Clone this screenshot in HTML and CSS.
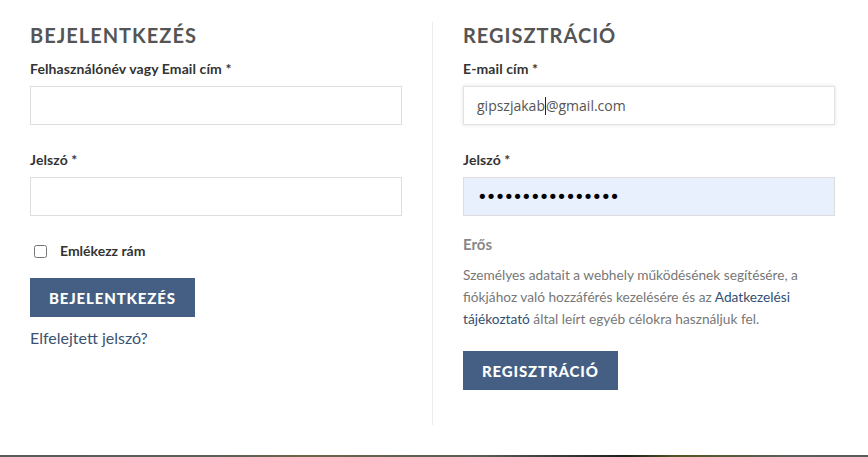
FILE: index.html
```html
<!DOCTYPE html>
<html lang="hu">
<head>
<meta charset="utf-8">
<title>Fiókom</title>
<link rel="stylesheet" href="styles.css">
</head>
<body>
<main class="account">
  <section class="col col-login">
    <h2 class="title">Bejelentkezés</h2>
    <label class="label" for="user">Felhasználónév vagy Email cím&nbsp;*</label>
    <input class="field" id="user" type="text">
    <label class="label label-gap" for="pass">Jelszó&nbsp;*</label>
    <input class="field" id="pass" type="password">
    <label class="remember"><input class="check" type="checkbox"><span>Emlékezz rám</span></label>
    <button class="btn" type="button">Bejelentkezés</button>
    <a class="lost" href="#">Elfelejtett jelszó?</a>
  </section>
  <section class="col col-register">
    <h2 class="title">Regisztráció</h2>
    <label class="label">E-mail cím&nbsp;*</label>
    <div class="field field-focus"><span>gipszjakab</span><span class="caret"></span><span>@gmail.com</span></div>
    <label class="label label-gap">Jelszó&nbsp;*</label>
    <div class="field field-autofill"><span class="dots">••••••••••••••••</span></div>
    <div class="strength">Erős</div>
    <p class="privacy">Személyes adatait a webhely működésének segítésére, a fiókjához való hozzáférés kezelésére és az <a href="#">Adatkezelési tájékoztató</a> által leírt egyéb célokra használjuk fel.</p>
    <button class="btn" type="button">Regisztráció</button>
  </section>
</main>
<div class="photo-edge"></div>
</body>
</html>
```

FILE: styles.css
```css
* { box-sizing: border-box; }

html, body {
  margin: 0;
  padding: 0;
  background: #fff;
  overflow: hidden;
}

body {
  font-family: Lato, "Open Sans", sans-serif;
  color: #333;
  height: 457px;
  display: flex;
  flex-direction: column;
}

.account {
  display: flex;
  padding: 22px 33px 0 30px;
}

.col {
  width: 402px;
  display: flex;
  flex-direction: column;
  align-items: flex-start;
}

.col-login {
  padding-right: 30px;
}

.col-register {
  width: 403px;
  padding-left: 30px;
  padding-bottom: 35px;
  border-left: 1px solid #ececec;
}

.title {
  margin: 0;
  font-size: 20px;
  line-height: 26px;
  font-weight: 700;
  letter-spacing: 1px;
  text-transform: uppercase;
  color: #555;
}

.label {
  display: block;
  margin-top: 11px;
  font-size: 14px;
  line-height: 20px;
  font-weight: 700;
  letter-spacing: 0.1px;
  color: #333;
}

.label-gap { margin-top: 25px; }

.field {
  display: flex;
  align-items: center;
  width: 100%;
  height: 39px;
  margin: 7px 0 0;
  padding: 0 13px;
  border: 1px solid #ddd;
  background: #fff;
  font-family: "Open Sans", sans-serif;
  font-size: 14px;
  color: #555;
  outline: none;
}

.field-focus {
  box-shadow: 0 0 4px rgba(0, 0, 0, 0.12);
  border-color: #e2e2e2;
}

.caret {
  display: inline-block;
  width: 1px;
  height: 18px;
  background: #222;
}

.field-autofill {
  background: #e8f0fe;
}

.dots {
  font-family: "DejaVu Sans", sans-serif;
  font-size: 18px;
  letter-spacing: -1.8px;
  color: #000;
}

.remember {
  display: flex;
  align-items: center;
  margin-top: 25px;
  font-size: 14px;
  line-height: 20px;
  font-weight: 700;
  color: #333;
}

.check {
  width: 13px;
  height: 13px;
  margin: 0 13px 0 4px;
}

.btn {
  margin-top: 17px;
  height: 39px;
  padding: 0 19px;
  border: 0;
  background: #445f83;
  color: #fff;
  font-family: Lato, sans-serif;
  font-size: 15px;
  font-weight: 900;
  letter-spacing: 0.85px;
  text-transform: uppercase;
}

.lost {
  margin-top: 10px;
  font-size: 16px;
  line-height: 22px;
  color: #3b5272;
  text-decoration: none;
}

.strength {
  margin-top: 18px;
  font-size: 15px;
  line-height: 20px;
  font-weight: 700;
  color: #888;
}

.privacy {
  margin: 10px 0 0;
  font-size: 13.7px;
  line-height: 22px;
  color: #777;
}

.privacy a {
  color: #334f72;
  text-decoration: none;
}

.col-register .btn { margin-top: 21px; }

.photo-edge {
  margin-top: auto;
  height: 2px;
  background: linear-gradient(90deg, #5a5a58 0%, #5f5d57 25%, #6b6448 35%, #5c5b56 55%, #1e1e1c 72%, #545420 78%, #5d5c58 90%, #5a5a58 100%);
}
```
